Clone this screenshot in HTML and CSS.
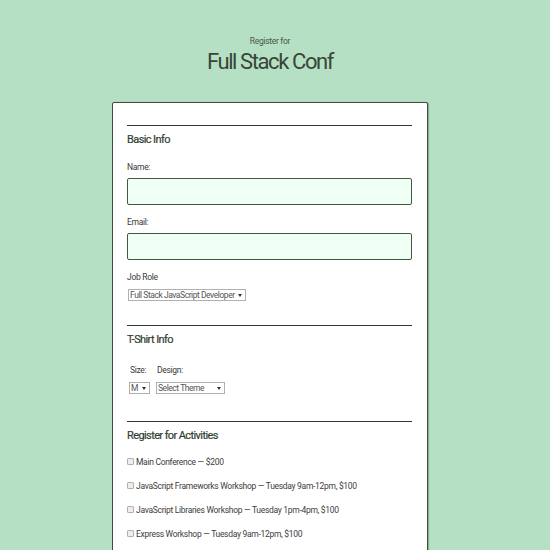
FILE: index.html
```html
<!DOCTYPE html>
<html>
<head>
<meta charset="utf-8">
<link rel="stylesheet" href="styles.css">
</head>
<body>
<div class="page">
  <header class="header">
    <p class="pre">Register for</p>
    <h1 class="title">Full Stack Conf</h1>
  </header>
  <form class="card">
    <section class="section">
      <h2 class="legend">Basic Info</h2>
      <label class="label first">Name:</label>
      <input class="text" type="text">
      <label class="label">Email:</label>
      <input class="text" type="email">
      <label class="label">Job Role</label>
      <select class="sel sel-role"><option>Full Stack JavaScript Developer</option></select>
    </section>
    <section class="section">
      <h2 class="legend">T-Shirt Info</h2>
      <div class="shirt">
        <div class="col">
          <label class="label small">Size:</label>
          <select class="sel sel-size"><option>M</option></select>
        </div>
        <div class="col">
          <label class="label small">Design:</label>
          <select class="sel sel-theme"><option>Select Theme</option></select>
        </div>
      </div>
    </section>
    <section class="section">
      <h2 class="legend">Register for Activities</h2>
      <div class="acts">
        <label class="act"><input type="checkbox" class="cb"> Main Conference — $200</label>
        <label class="act"><input type="checkbox" class="cb"> JavaScript Frameworks Workshop — Tuesday 9am-12pm, $100</label>
        <label class="act"><input type="checkbox" class="cb"> JavaScript Libraries Workshop — Tuesday 1pm-4pm, $100</label>
        <label class="act"><input type="checkbox" class="cb"> Express Workshop — Tuesday 9am-12pm, $100</label>
      </div>
    </section>
  </form>
</div>
</body>
</html>
```
FILE: styles.css
```css
* { box-sizing: border-box; }
html, body { margin: 0; padding: 0; }
body {
  background: #b5e0c3;
  font-family: "Roboto", "Liberation Sans", sans-serif;
  color: #3b4a3b;
  overflow: hidden;
  height: 550px;
}
.page {
  width: 540px;
  display: flex;
  flex-direction: column;
  align-items: center;
}
.header {
  padding-top: 35px;
  text-align: center;
}
.pre {
  margin: 0;
  font-size: 8.5px;
  line-height: 12px;
  letter-spacing: -0.3px;
  color: #4a574a;
}
.title {
  margin: 1px 0 0;
  font-size: 22px;
  line-height: 28px;
  letter-spacing: -1.4px;
  font-weight: normal;
  color: #384538;
}
.card {
  margin-top: 26px;
  width: 316px;
  height: 460px;
  background: #fff;
  border: 1px solid #3e4d3e;
  border-radius: 2px;
  box-shadow: 1px 0 1px rgba(0,0,0,0.25);
  padding: 22px 15px 0 14px;
  display: flex;
  flex-direction: column;
}
.section {
  border-top: 1px solid #2f3d2f;
  display: flex;
  flex-direction: column;
  align-items: flex-start;
  padding-bottom: 24px;
}
.legend {
  margin: 7px 0 0;
  font-size: 11px;
  line-height: 14px;
  letter-spacing: -0.6px;
  font-weight: normal;
  color: #2f3d2f;
  -webkit-text-stroke: 0.2px #2f3d2f;
}
.label {
  display: block;
  margin-top: 11px;
  font-size: 8.5px;
  line-height: 12px;
  letter-spacing: -0.3px;
  color: #3a3a3a;
}
.label.first { margin-top: 14px; }
.text {
  margin-top: 5px;
  width: 285px;
  height: 27px;
  background: #effff4;
  border: 1px solid #3f5a3f;
  border-radius: 2px;
  outline: none;
}
.sel {
  -webkit-appearance: none;
  appearance: none;
  margin-top: 6px;
  height: 12px;
  padding: 0 8px 0 1px;
  font-family: inherit;
  font-size: 8.5px;
  line-height: 10px;
  letter-spacing: -0.45px;
  color: #555;
  background: #fff url("data:image/svg+xml,%3Csvg xmlns='http://www.w3.org/2000/svg' width='4' height='3'%3E%3Cpath d='M0 0h4L2 3z' fill='%23333'/%3E%3C/svg%3E") no-repeat right 3px center;
  border: 1px solid #b0b0b0;
  border-radius: 0;
}
.sel-role { width: 118px; margin-left: 1px; }
.shirt {
  display: flex;
  gap: 6px;
  margin-top: 5px;
  margin-left: 2px;
}
.col { display: flex; flex-direction: column; align-items: flex-start; }
.label.small { margin-top: 12px; margin-left: 1px; }
.sel-size { width: 21px; }
.sel-theme { width: 69px; }
.section:nth-child(2) { padding-bottom: 27px; }
.acts {
  margin-top: 13px;
  display: flex;
  flex-direction: column;
  gap: 12px;
}
.act {
  display: flex;
  align-items: center;
  gap: 2px;
  font-size: 8.5px;
  line-height: 12px;
  letter-spacing: -0.3px;
  color: #3d3d3d;
}
.cb {
  -webkit-appearance: none;
  appearance: none;
  margin: 0 0 2px;
  width: 7px;
  height: 7px;
  border: 1px solid #b0b0b0;
  border-radius: 1px;
  background: #eee;
}
```
